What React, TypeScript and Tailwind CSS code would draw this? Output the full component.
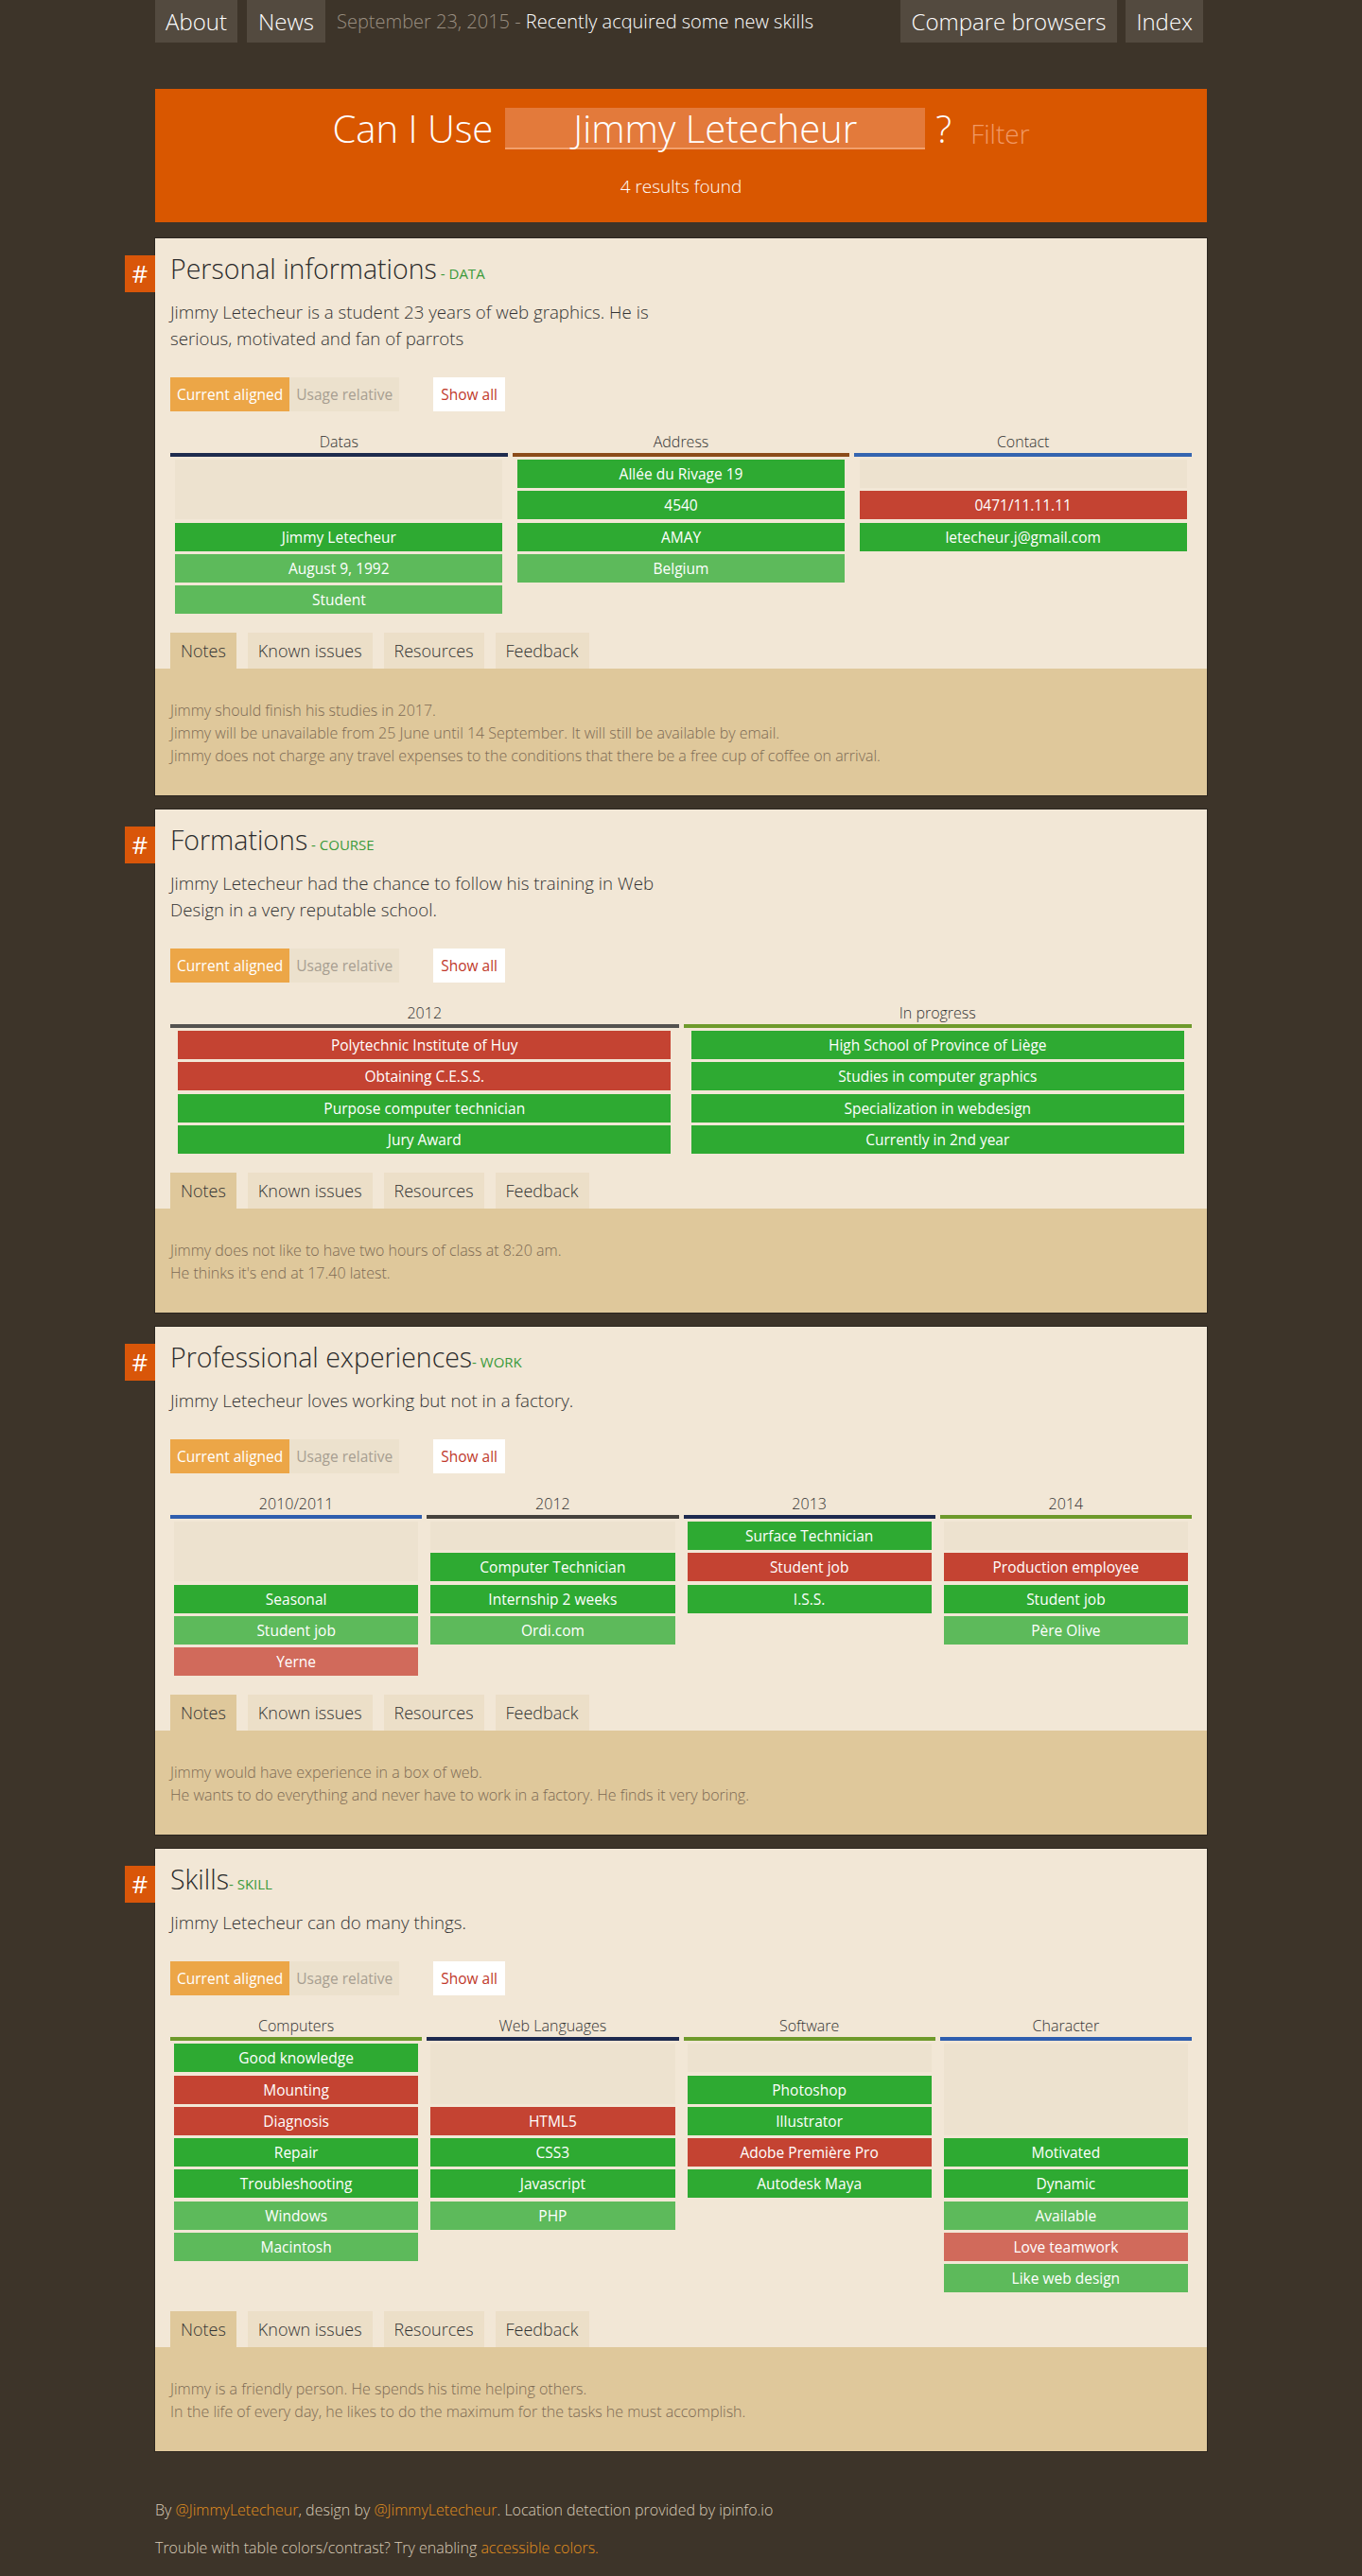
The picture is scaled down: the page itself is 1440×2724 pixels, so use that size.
import React from 'react';

type Tone = 'g' | 'lg' | 'r' | 'lr';
type Cell = { t: string; c: Tone } | { gap: number };
type Column = { name: string; bar: string; cells: Cell[] };
type Section = {
  title: string;
  tag: string;
  desc: string;
  cols: Column[];
  notes: string[];
};

const tone: Record<Tone, string> = {
  g: 'bg-[#2eaa32]',
  lg: 'bg-[#5dba5b]',
  r: 'bg-[#c44332]',
  lr: 'bg-[#d16a5b]',
};

const sections: Section[] = [
  {
    title: 'Personal informations',
    tag: ' - DATA',
    desc: 'Jimmy Letecheur is a student 23 years of web graphics. He is serious, motivated and fan of parrots',
    cols: [
      {
        name: 'Datas',
        bar: 'bg-[#1f2c4e]',
        cells: [
          { gap: 2 },
          { t: 'Jimmy Letecheur', c: 'g' },
          { t: 'August 9, 1992', c: 'lg' },
          { t: 'Student', c: 'lg' },
        ],
      },
      {
        name: 'Address',
        bar: 'bg-[#8b4b19]',
        cells: [
          { t: 'Allée du Rivage 19', c: 'g' },
          { t: '4540', c: 'g' },
          { t: 'AMAY', c: 'g' },
          { t: 'Belgium', c: 'lg' },
        ],
      },
      {
        name: 'Contact',
        bar: 'bg-[#3565b0]',
        cells: [
          { gap: 1 },
          { t: '0471/11.11.11', c: 'r' },
          { t: 'letecheur.j@gmail.com', c: 'g' },
        ],
      },
    ],
    notes: [
      'Jimmy should finish his studies in 2017.',
      'Jimmy will be unavailable from 25 June until 14 September. It will still be available by email.',
      'Jimmy does not charge any travel expenses to the conditions that there be a free cup of coffee on arrival.',
    ],
  },
  {
    title: 'Formations',
    tag: ' - COURSE',
    desc: 'Jimmy Letecheur had the chance to follow his training in Web Design in a very reputable school.',
    cols: [
      {
        name: '2012',
        bar: 'bg-[#54524f]',
        cells: [
          { t: 'Polytechnic Institute of Huy', c: 'r' },
          { t: 'Obtaining C.E.S.S.', c: 'r' },
          { t: 'Purpose computer technician', c: 'g' },
          { t: 'Jury Award', c: 'g' },
        ],
      },
      {
        name: 'In progress',
        bar: 'bg-[#6e9a2b]',
        cells: [
          { t: 'High School of Province of Liège', c: 'g' },
          { t: 'Studies in computer graphics', c: 'g' },
          { t: 'Specialization in webdesign', c: 'g' },
          { t: 'Currently in 2nd year', c: 'g' },
        ],
      },
    ],
    notes: [
      'Jimmy does not like to have two hours of class at 8:20 am.',
      "He thinks it's end at 17.40 latest.",
    ],
  },
  {
    title: 'Professional experiences',
    tag: '- WORK',
    desc: 'Jimmy Letecheur loves working but not in a factory.',
    cols: [
      {
        name: '2010/2011',
        bar: 'bg-[#2f5eae]',
        cells: [
          { gap: 2 },
          { t: 'Seasonal', c: 'g' },
          { t: 'Student job', c: 'lg' },
          { t: 'Yerne', c: 'lr' },
        ],
      },
      {
        name: '2012',
        bar: 'bg-[#46423d]',
        cells: [
          { gap: 1 },
          { t: 'Computer Technician', c: 'g' },
          { t: 'Internship 2 weeks', c: 'g' },
          { t: 'Ordi.com', c: 'lg' },
        ],
      },
      {
        name: '2013',
        bar: 'bg-[#1e2a4f]',
        cells: [
          { t: 'Surface Technician', c: 'g' },
          { t: 'Student job', c: 'r' },
          { t: 'I.S.S.', c: 'g' },
        ],
      },
      {
        name: '2014',
        bar: 'bg-[#6e9a2b]',
        cells: [
          { gap: 1 },
          { t: 'Production employee', c: 'r' },
          { t: 'Student job', c: 'g' },
          { t: 'Père Olive', c: 'lg' },
        ],
      },
    ],
    notes: [
      'Jimmy would have experience in a box of web.',
      'He wants to do everything and never have to work in a factory. He finds it very boring.',
    ],
  },
  {
    title: 'Skills',
    tag: '- SKILL',
    desc: 'Jimmy Letecheur can do many things.',
    cols: [
      {
        name: 'Computers',
        bar: 'bg-[#6e9a2b]',
        cells: [
          { t: 'Good knowledge', c: 'g' },
          { t: 'Mounting', c: 'r' },
          { t: 'Diagnosis', c: 'r' },
          { t: 'Repair', c: 'g' },
          { t: 'Troubleshooting', c: 'g' },
          { t: 'Windows', c: 'lg' },
          { t: 'Macintosh', c: 'lg' },
        ],
      },
      {
        name: 'Web Languages',
        bar: 'bg-[#1e2a4f]',
        cells: [
          { gap: 2 },
          { t: 'HTML5', c: 'r' },
          { t: 'CSS3', c: 'g' },
          { t: 'Javascript', c: 'g' },
          { t: 'PHP', c: 'lg' },
        ],
      },
      {
        name: 'Software',
        bar: 'bg-[#6e9a2b]',
        cells: [
          { gap: 1 },
          { t: 'Photoshop', c: 'g' },
          { t: 'Illustrator', c: 'g' },
          { t: 'Adobe Première Pro', c: 'r' },
          { t: 'Autodesk Maya', c: 'g' },
        ],
      },
      {
        name: 'Character',
        bar: 'bg-[#2f5eae]',
        cells: [
          { gap: 3 },
          { t: 'Motivated', c: 'g' },
          { t: 'Dynamic', c: 'g' },
          { t: 'Available', c: 'lg' },
          { t: 'Love teamwork', c: 'lr' },
          { t: 'Like web design', c: 'lg' },
        ],
      },
    ],
    notes: [
      'Jimmy is a friendly person. He spends his time helping others.',
      'In the life of every day, he likes to do the maximum for the tasks he must accomplish.',
    ],
  },
];

function StatCell({ cell }: { cell: Cell }) {
  if ('gap' in cell) {
    // empty slot, keeps rows aligned on "current"
    return (
      <div
        className="w-[97%] mx-auto bg-[#ede2cf]"
        style={{ height: cell.gap * 30 + (cell.gap - 1) * 3.3 }}
      />
    );
  }
  return (
    <div
      className={`w-[97%] mx-auto h-[30px] leading-[30px] text-center text-white text-[15.5px] font-normal ${tone[cell.c]}`}
    >
      {cell.t}
    </div>
  );
}

function FeatureCard({ s }: { s: Section }) {
  return (
    <div className="relative bg-[#f2e7d6] shadow-[0_0_0_1px_#2c261f]">
      <div className="absolute left-[-32px] top-[18px] w-[32px] h-[39px] bg-[#d95609] text-white text-[26px] leading-[39px] text-center">
        #
      </div>

      <div className="px-4 pt-[12px]">
        <h2 className="text-[28.5px] leading-[40px] font-light text-[#2b2b2b]">
          {s.title}
          <span className="text-[15px] text-[#3b9a3b] font-normal">{s.tag}</span>
        </h2>
        <p className="mt-[7px] max-w-[545px] text-[18.7px] leading-[28px] font-light text-[#333]">
          {s.desc}
        </p>

        <div className="mt-[27px] flex items-center text-[15.5px]">
          <span className="h-[36px] px-[7px] leading-[36px] bg-[#eca647] text-white">
            Current aligned
          </span>
          <span className="h-[36px] px-[7px] leading-[36px] bg-[#ece1cd] text-[#a79e91]">
            Usage relative
          </span>
          <span className="ml-[36px] h-[36px] px-[8px] leading-[36px] bg-white text-[#c0392b]">
            Show all
          </span>
        </div>

        <div className="mt-[20px] flex gap-[5px]">
          {s.cols.map((col, i) => (
            <div key={i} className="flex-1 min-w-0">
              <div className="text-center text-[16px] leading-[24px] font-light text-[#333]">{col.name}</div>
              <div className={`h-[4px] ${col.bar}`} />
              <div className="mt-[3px] flex flex-col gap-[3.3px]">
                {col.cells.map((c, j) => (
                  <StatCell key={j} cell={c} />
                ))}
              </div>
            </div>
          ))}
        </div>

        <div className="mt-[20px] flex gap-[12px] text-[18px] leading-[38px] font-light text-[#333]">
          <span className="px-[11px] bg-[#dfc89b]">Notes</span>
          <span className="px-[11px] bg-[#ecdfc8]">Known issues</span>
          <span className="px-[11px] bg-[#ecdfc8]">Resources</span>
          <span className="px-[11px] bg-[#ecdfc8]">Feedback</span>
        </div>
      </div>

      <div className="bg-[#dfc89b] px-4 pt-[32px] pb-[30px] text-[16px] leading-[24px] font-light text-[#7d6a54]">
        {s.notes.map((n, i) => (
          <p key={i}>{n}</p>
        ))}
      </div>
    </div>
  );
}

export default function App() {
  return (
    <div className="min-h-[2724px] bg-[#3d3429] font-['Open_Sans',sans-serif]">
      <div className="w-[1112px] mx-auto">
        <nav className="flex items-center justify-between h-[45px]">
          <div className="flex items-center gap-[10px] h-full">
            <a className="h-full px-[11px] leading-[45px] bg-[#534a3f] text-white text-[24px] font-light">About</a>
            <a className="h-full px-[12px] leading-[45px] bg-[#534a3f] text-white text-[24px] font-light">News</a>
            <span className="ml-[2px] text-[20px] font-light text-[#9a8f81]">
              September 23, 2015 - <span className="text-white">Recently acquired some new skills</span>
            </span>
          </div>
          <div className="flex items-center gap-[9px] h-full pr-[4px]">
            <a className="h-full px-[12px] leading-[45px] bg-[#534a3f] text-white text-[24px] font-light">Compare browsers</a>
            <a className="h-full px-[11px] leading-[45px] bg-[#534a3f] text-white text-[24px] font-light">Index</a>
          </div>
        </nav>

        <header className="mt-[49px] h-[141px] bg-[#d95700] text-white flex flex-col items-center">
          <div className="mt-[20px] flex items-center font-light">
            <span className="text-[40px] leading-[44px]">Can I Use</span>
            <div className="ml-[13px] w-[444px] h-[44px] bg-[#e37a3b] border-b-2 border-[#f2a06c] text-center text-[40px] leading-[44px]">
              Jimmy Letecheur
            </div>
            <span className="ml-[11px] text-[40px] leading-[44px]">?</span>
            <span className="ml-[20px] mt-[10px] text-[28px] leading-[34px] text-[#f19a66]">Filter</span>
          </div>
          <div className="mt-[25px] text-[19px] font-light">4 results found</div>
        </header>

        <main className="mt-[17px] flex flex-col gap-[15px]">
          {sections.map((s, i) => (
            <FeatureCard key={i} s={s} />
          ))}
        </main>

        <footer className="mt-[50px] pb-[20px] text-[16px] leading-[24px] font-light text-[#d8cbb7]">
          <p>
            By <a className="text-[#e18f1f]">@JimmyLetecheur</a>, design by{' '}
            <a className="text-[#e18f1f]">@JimmyLetecheur</a>. Location detection provided by ipinfo.io
          </p>
          <p className="mt-[16px]">
            Trouble with table colors/contrast? Try enabling{' '}
            <a className="text-[#e18f1f]">accessible colors.</a>
          </p>
        </footer>
      </div>
    </div>
  );
}
